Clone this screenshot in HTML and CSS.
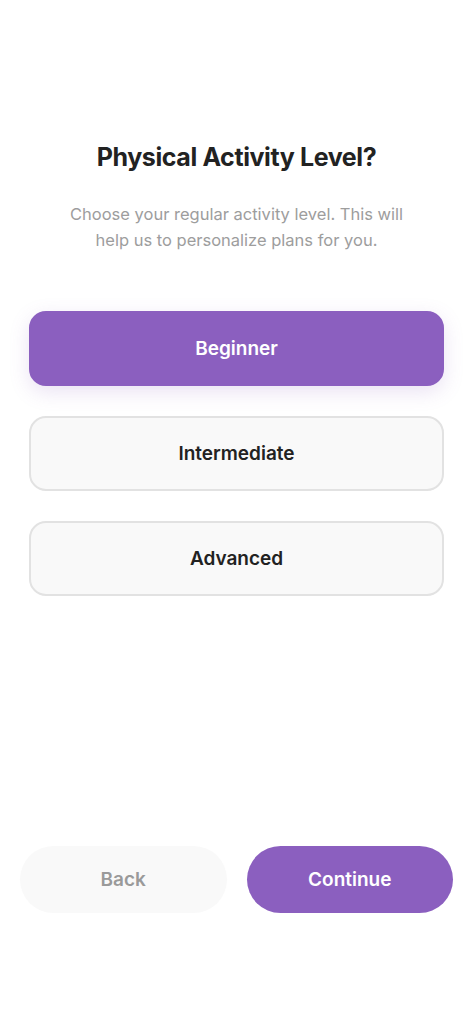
FILE: index.html
```html
<!DOCTYPE HTML>
<html>
<head>
  <meta name="viewport" content="width=device-width, initial-scale=1">
  <title>Physical Activity Level</title>
  <link rel="stylesheet" href="styles.css">
</head>
<body>
  <div class="screen">
    <div class="content">
      <h1 class="title">Physical Activity Level?</h1>
      <p class="subtitle">Choose your regular activity level. This will help us to personalize plans for you.</p>

      <div class="options">
        <button class="option selected">Beginner</button>
        <button class="option">Intermediate</button>
        <button class="option">Advanced</button>
      </div>
    </div>

    <div class="actions">
      <button class="pill back">Back</button>
      <button class="pill continue">Continue</button>
    </div>
  </div>
</body>
</html>
```

FILE: styles.css
```css
body {
  margin: 0;
  background-color: #fff;
  font-family: Inter, "Noto Sans", sans-serif;
}

.screen {
  height: 1024px;
  display: flex;
  flex-direction: column;
  justify-content: space-between;
  box-sizing: border-box;
  padding: 141px 0 111px;
}

.content {
  padding: 0 29px;
  text-align: center;
}

.title {
  margin: 0;
  font-size: 25px;
  line-height: 32px;
  font-weight: 700;
  color: #222;
  letter-spacing: -0.4px;
}

.subtitle {
  margin: 28px auto 0;
  max-width: 350px;
  font-size: 16.5px;
  line-height: 26px;
  color: #9d9d9d;
}

.options {
  display: flex;
  flex-direction: column;
  gap: 30px;
  margin-top: 58px;
}

.option {
  height: 75px;
  border: 2px solid #e2e2e2;
  border-radius: 17px;
  background-color: #f9f9f9;
  font-family: inherit;
  font-size: 19px;
  font-weight: 600;
  color: #222;
  cursor: pointer;
}

.option.selected {
  border-color: #8b5fbf;
  background-color: #8b5fbf;
  color: #fff;
  box-shadow: 0 6px 20px rgba(139, 95, 191, 0.18);
}

.actions {
  display: flex;
  gap: 20px;
  padding: 0 20px;
}

.pill {
  flex: 1;
  height: 67px;
  border: none;
  border-radius: 34px;
  font-family: inherit;
  font-size: 19px;
  font-weight: 600;
  cursor: pointer;
}

.pill.back {
  background-color: #f9f9f9;
  color: #9a9a9a;
}

.pill.continue {
  background-color: #8b5fbf;
  color: #fff;
}
```
